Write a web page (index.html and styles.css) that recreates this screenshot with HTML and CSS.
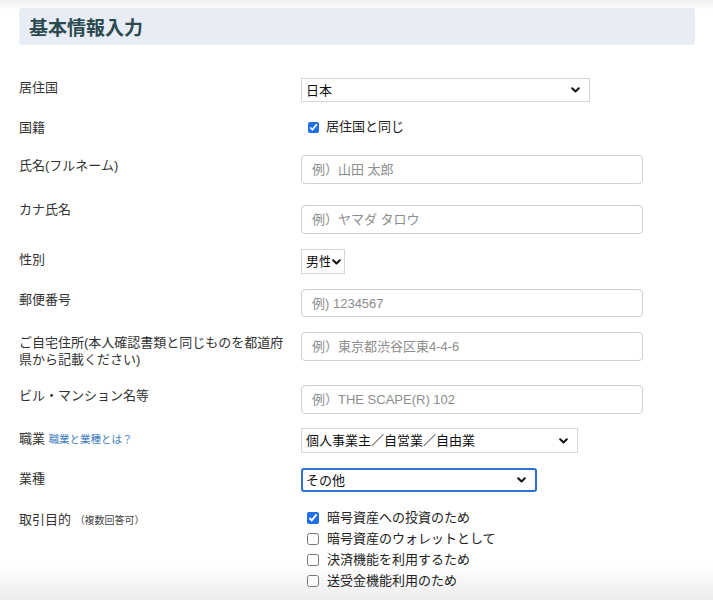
FILE: index.html
```html
<!DOCTYPE html>
<html lang="ja">
<head>
<meta charset="utf-8">
<title>基本情報入力</title>
<link rel="stylesheet" href="styles.css">
</head>
<body>
<div class="page">
  <h2 class="section-title">基本情報入力</h2>
  <form class="form">
    <div class="row r1">
      <div class="label">居住国</div>
      <div class="ctrl"><select class="sel sel-country"><option>日本</option></select></div>
    </div>
    <div class="row r2">
      <div class="label">国籍</div>
      <div class="ctrl"><label class="check"><input type="checkbox" checked> 居住国と同じ</label></div>
    </div>
    <div class="row r3">
      <div class="label">氏名(フルネーム)</div>
      <div class="ctrl"><input class="txt" type="text" placeholder="例）山田 太郎"></div>
    </div>
    <div class="row r4">
      <div class="label">カナ氏名</div>
      <div class="ctrl"><input class="txt" type="text" placeholder="例）ヤマダ タロウ"></div>
    </div>
    <div class="row r5">
      <div class="label">性別</div>
      <div class="ctrl"><select class="sel sel-gender"><option>男性</option></select></div>
    </div>
    <div class="row r6">
      <div class="label">郵便番号</div>
      <div class="ctrl"><input class="txt" type="text" placeholder="例) 1234567"></div>
    </div>
    <div class="row r7">
      <div class="label two">ご自宅住所(本人確認書類と同じものを都道府県から記載ください)</div>
      <div class="ctrl"><input class="txt" type="text" placeholder="例）東京都渋谷区東4-4-6"></div>
    </div>
    <div class="row r8">
      <div class="label">ビル・マンション名等</div>
      <div class="ctrl"><input class="txt" type="text" placeholder="例）THE SCAPE(R) 102"></div>
    </div>
    <div class="row r9">
      <div class="label">職業 <a class="help" href="#">職業と業種とは？</a></div>
      <div class="ctrl"><select class="sel sel-job"><option>個人事業主／自営業／自由業</option></select></div>
    </div>
    <div class="row r10">
      <div class="label">業種</div>
      <div class="ctrl"><select class="sel sel-ind focus"><option>その他</option></select></div>
    </div>
    <div class="row r11">
      <div class="label">取引目的 <span class="note">（複数回答可）</span></div>
      <div class="ctrl checks">
        <label class="check"><input type="checkbox" checked> 暗号資産への投資のため</label>
        <label class="check"><input type="checkbox"> 暗号資産のウォレットとして</label>
        <label class="check"><input type="checkbox"> 決済機能を利用するため</label>
        <label class="check"><input type="checkbox"> 送受金機能利用のため</label>
      </div>
    </div>
  </form>
</div>
</body>
</html>
```
FILE: styles.css
```css
html {
  height: 100%;
  background: linear-gradient(to bottom, #eef0f0 0px, #ffffff 10px, #ffffff 566px, #ececec 600px) no-repeat;
  background-size: 100% 600px;
}
body {
  margin: 0;
  font-family: "Liberation Sans", "Noto Sans CJK JP", sans-serif;
  font-size: 13px;
  color: #333;
}
.page {
  padding: 8px 18px 0 19px;
}
.section-title {
  margin: 0;
  height: 37px;
  line-height: 37px;
  padding-left: 10px;
  background: #e8ecf4;
  border-radius: 3px;
  font-size: 19px;
  font-weight: bold;
  color: #2b4a50;
  font-family: "Noto Sans CJK JP", sans-serif;
}
.form {
  display: flex;
  flex-direction: column;
}
.row {
  display: grid;
  grid-template-columns: 282px 1fr;
  align-items: start;
  margin-top: 15px;
}
.label {
  line-height: 18px;
  margin-top: 2px;
  color: #333;
}
.label.two {
  line-height: 17px;
  padding-right: 10px;
}
.r1 { margin-top: 33px; }
.r1 .label { margin-top: 1px; }
.r2 { margin-top: 16px; }
.r2 .label { margin-top: 1px; }
.r3 { margin-top: 18px; }
.r4 { margin-top: 17px; }
.r4 .label { margin-top: 0; }
.r4 .ctrl { margin-top: 4px; }
.r8 { margin-top: 17px; }
.r9 { margin-top: 14px; }
.r11 { margin-top: 15px; }
.r11 .label { margin-top: 4px; }

.help {
  font-size: 10.5px;
  color: #3b7bbd;
  text-decoration: none;
}
.note {
  font-size: 10px;
  color: #444;
}

.sel {
  appearance: none;
  -webkit-appearance: none;
  font-family: inherit;
  font-size: 13px;
  color: #111;
  height: 24px;
  border: 1px solid #d6d6d6;
  border-radius: 0;
  background: #fff url("data:image/svg+xml;utf8,<svg xmlns='http://www.w3.org/2000/svg' width='9' height='6' viewBox='0 0 9 6'><path d='M1.2 1.2 L4.5 4.5 L7.8 1.2' fill='none' stroke='%23111' stroke-width='2' stroke-linecap='round' stroke-linejoin='round'/></svg>") no-repeat;
  background-position: right 9px center;
  padding: 0 24px 0 4px;
  display: block;
  margin: 0;
}
.sel-country { width: 289px; }
.sel-gender { width: 44px; height: 25px; padding-right: 14px; background-position: right 3px center; }
.sel-job { width: 277px; height: 25px; }
.sel-ind { width: 236px; }
.sel.focus {
  border: 2px solid #2f6fd6;
  border-radius: 3px;
  padding-left: 3px;
}

.txt {
  box-sizing: border-box;
  width: 342px;
  height: 29px;
  border: 1px solid #d0d0d0;
  border-radius: 4px;
  padding: 0 10px;
  font-family: inherit;
  font-size: 13px;
  color: #111;
  margin: 0;
  display: block;
}
.r6 .txt { height: 28px; }
.txt::placeholder { color: #8d8d8d; }

.check {
  display: flex;
  align-items: center;
  line-height: 18px;
  color: #222;
  font-size: 13px;
}
.check input {
  accent-color: #1f6fe6;
  width: 11px;
  height: 11px;
  margin: 0 7px 0 7px;
}
.checks .check {
  line-height: 21px;
}
.checks .check input {
  width: 12px;
  height: 12px;
  margin: 0 8px 0 6px;
}
```
